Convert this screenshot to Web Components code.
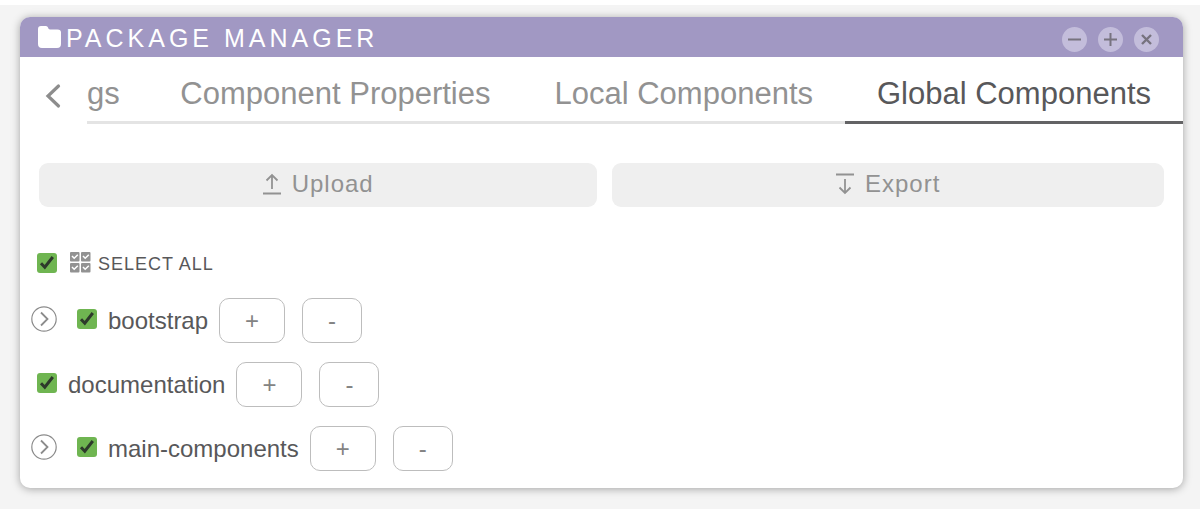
<!DOCTYPE html>
<html lang="en">
<head>
<meta charset="utf-8">
<title>Package Manager</title>
<style>
  html { background: #f4f4f4; }
  body {
    margin: 0;
    border-top: 5px solid #fff;
    padding: 12px 17px 21px 20px;
    font-family: "Liberation Sans", Arial, sans-serif;
    color: #58585a;
  }
</style>
</head>
<body>
<package-manager></package-manager>

<template id="t-window">
  <style>
    :host { display: block; background: #fff; border-radius: 10px; box-shadow: 0 1px 8px rgba(0,0,0,.34); overflow: hidden; }
    header { display: flex; align-items: center; height: 40px; padding: 0 24px 0 18px; box-sizing: border-box; background: #a198c3; color: #fff; }
    .folder { width: 24px; height: 24px; flex: none; }
    h1 { flex: 1; margin: 0 0 0 4px; padding-top: 2px; font-size: 25px; line-height: 28px; font-weight: 400; letter-spacing: 4px; white-space: nowrap; }
    .controls { display: flex; gap: 11px; align-self: flex-end; padding-bottom: 5px; }
    button { display: block; width: 25px; height: 25px; padding: 0; border: 0; border-radius: 50%; background: #c3bddb; color: #77737f; }
    svg { display: block; }
  </style>
  <header>
    <svg class="folder" viewBox="0 0 24 24" fill="currentColor" aria-hidden="true"><path d="M3 1h5q1.500 0 2 1.500.4 2 2 2h7.500q3.500 0 3.500 3V19q0 4-4 4H4q-4 0-4-4V4q0-3 3-3z"/></svg>
    <h1><slot name="title"></slot></h1>
    <div class="controls">
      <button type="button" aria-label="Minimize"><svg viewBox="0 0 25 25" stroke="currentColor" stroke-width="2" aria-hidden="true"><path d="M6 12.500h13"/></svg></button>
      <button type="button" aria-label="Maximize"><svg viewBox="0 0 25 25" stroke="currentColor" stroke-width="2" aria-hidden="true"><path d="M6 12.500h13M12.500 6v13"/></svg></button>
      <button type="button" aria-label="Close"><svg viewBox="0 0 25 25" stroke="currentColor" stroke-width="2.400" aria-hidden="true"><path d="M8 8l9 9M17 8l-9 9"/></svg></button>
    </div>
  </header>
  <slot></slot>
</template>

<template id="t-tabs">
  <style>
    :host { display: flex; align-items: stretch; height: 67px; }
    .back { width: 67px; flex: none; padding: 10px 0 0 23px; border: 0; background: none; color: #8d8d8d; box-sizing: border-box; }
    .back svg { display: block; width: 20px; height: 26px; }
    .list { flex: 1; display: flex; min-width: 0; }
  </style>
  <button class="back" type="button" aria-label="Previous tabs"><svg viewBox="0 0 20 26" fill="none" stroke="currentColor" stroke-width="3.200" stroke-linecap="round" aria-hidden="true"><path d="M15.500 3L5 13l10.500 10"/></svg></button>
  <div class="list" role="tablist"><slot></slot></div>
</template>

<template id="t-tab">
  <style>
    :host { display: block; flex: none; }
    :host([clipped]) { flex: 1 1 0; min-width: 0; }
    button { width: 100%; height: 100%; padding: 15px 32px 0; border: 0; border-bottom: 3px solid #e4e4e4; box-sizing: border-box; background: none; font: inherit; font-size: 31px; line-height: 36px; color: #929292; white-space: nowrap; text-align: left; display: block; }
    :host([clipped]) button { padding-left: 0; }
    :host([active]) button { color: #58585a; border-color: #636365; }
    span { display: block; height: 42px; }
  </style>
  <button type="button" role="tab"><span><slot></slot></span></button>
</template>

<template id="t-action">
  <style>
    :host { display: block; flex: 1 1 auto; }
    button { display: flex; width: 100%; height: 44px; align-items: center; justify-content: center; gap: 9px; padding: 0 2px 2px 0; border: 0; border-radius: 9px; background: #efefef; color: #929292; font: inherit; font-size: 24px; line-height: 28px; letter-spacing: 1px; }
  </style>
  <button type="button"><slot name="icon"></slot><span><slot></slot></span></button>
</template>

<template id="t-row">
  <style>
    :host { display: flex; align-items: center; }
    :host([heading]) { margin-bottom: 4px; }
    .expand { width: 26px; height: 26px; flex: none; margin: 0 20px 4px -6px; padding: 0; border: 0; background: none; color: #8c8c8c; }
    svg { display: block; }
    :host(:not([expandable])) .expand { display: none; }
    label { display: flex; align-items: center; gap: 11px; padding-bottom: 4px; font-size: 24px; line-height: 28px; margin-right: 11px; white-space: nowrap; }
    :host([heading]) label { gap: 12px; padding: 0; font-size: 18px; line-height: 22px; letter-spacing: 1px; }
    .text { display: flex; align-items: center; gap: 7px; padding-top: 2px; }
    :host([heading]) .text { padding: 0; }
    .text > span { padding-top: 2px; }
    .check { display: grid; width: 20px; height: 20px; }
    .check > * { grid-area: 1 / 1; }
    input { appearance: none; width: 20px; height: 20px; margin: 0; border-radius: 3px; background: #6fb551; }
    .check svg { width: 20px; height: 20px; pointer-events: none; visibility: hidden; }
    input:checked + svg { visibility: visible; }
    .actions { display: flex; gap: 17px; }
    :host([heading]) .actions { display: none; }
    .actions button { height: 45px; padding: 0 25px; border: 1px solid #bdbdbd; border-radius: 10px; background: #fff; color: #838383; font: inherit; font-size: 24px; line-height: 28px; }
  </style>
  <button class="expand" type="button" aria-label="Expand"><svg viewBox="0 0 26 26" fill="none" stroke="currentColor" aria-hidden="true"><circle cx="13" cy="13" r="12.200" stroke-width="1.200"/><path d="M10 6.500l6.500 6.500-6.500 6.500" stroke-width="1.800"/></svg></button>
  <label>
    <span class="check">
      <input type="checkbox" checked>
      <svg viewBox="0 0 20 20" fill="none" stroke="#2d3a2b" stroke-width="3" aria-hidden="true"><path d="M4 10.200l3.800 4L15.800 4"/></svg>
    </span>
    <span class="text"><slot name="icon"></slot><span><slot></slot></span></span>
  </label>
  <div class="actions">
    <button type="button">+</button>
    <button type="button">-</button>
  </div>
</template>

<template id="t-app">
  <style>
    :host { display: block; }
    .transfer { display: flex; gap: 15px; padding: 39px 19px 0; }
    .packages { display: flex; flex-direction: column; gap: 19px; padding: 44px 17px 17px; }
    svg { display: block; flex: none; }
    [slot=icon] { width: 22px; height: 22px; }
  </style>
  <pm-window>
    <span slot="title">PACKAGE MANAGER</span>
    <pm-tabs>
      <pm-tab clipped>gs</pm-tab>
      <pm-tab>Component Properties</pm-tab>
      <pm-tab>Local Components</pm-tab>
      <pm-tab active>Global Components</pm-tab>
    </pm-tabs>
    <div class="transfer">
      <pm-action><svg slot="icon" viewBox="0 0 22 22" fill="none" stroke="#929292" stroke-width="1.800" aria-hidden="true"><path d="M2 20.500h18M11 16V2M5.500 7.500L11 2l5.500 5.500"/></svg>Upload</pm-action>
      <pm-action><svg slot="icon" viewBox="0 0 22 22" fill="none" stroke="#929292" stroke-width="1.800" aria-hidden="true"><path d="M2 1.500h18M11 6v14M5.500 14.500L11 20l5.500-5.500"/></svg>Export</pm-action>
    </div>
    <div class="packages">
      <pm-row heading><svg slot="icon" viewBox="0 0 22 22" aria-hidden="true"><g fill="#929292"><rect x="1" y="0" width="9.500" height="9.500" rx="1"/><rect x="12" y="0" width="9.500" height="9.500" rx="1"/><rect x="1" y="11" width="9.500" height="9.500" rx="1"/><rect x="12" y="11" width="9.500" height="9.500" rx="1"/></g><path d="M3 4l2.200 2.200 3.600-3.500M14 4l2.200 2.200 3.600-3.500M3 15l2.200 2.200 3.600-3.500M14 15l2.200 2.200 3.600-3.500" fill="none" stroke="#fff" stroke-width="1.500"/></svg>SELECT ALL</pm-row>
      <pm-row expandable>bootstrap</pm-row>
      <pm-row>documentation</pm-row>
      <pm-row expandable>main-components</pm-row>
    </div>
  </pm-window>
</template>

<script>
  const define = (name, templateId, setup) => customElements.define(name, class extends HTMLElement {
    constructor() {
      super();
      this.attachShadow({ mode: "open" }).append(document.getElementById(templateId).content.cloneNode(true));
    }
    connectedCallback() { if (setup) setup(this, this.shadowRoot); }
  });

  define("pm-window", "t-window");
  define("pm-tabs", "t-tabs");
  define("pm-tab", "t-tab", (host, root) =>
    root.querySelector("button").setAttribute("aria-selected", String(host.hasAttribute("active"))));
  define("pm-action", "t-action");
  define("pm-row", "t-row");
  define("package-manager", "t-app");
</script>
</body>
</html>
